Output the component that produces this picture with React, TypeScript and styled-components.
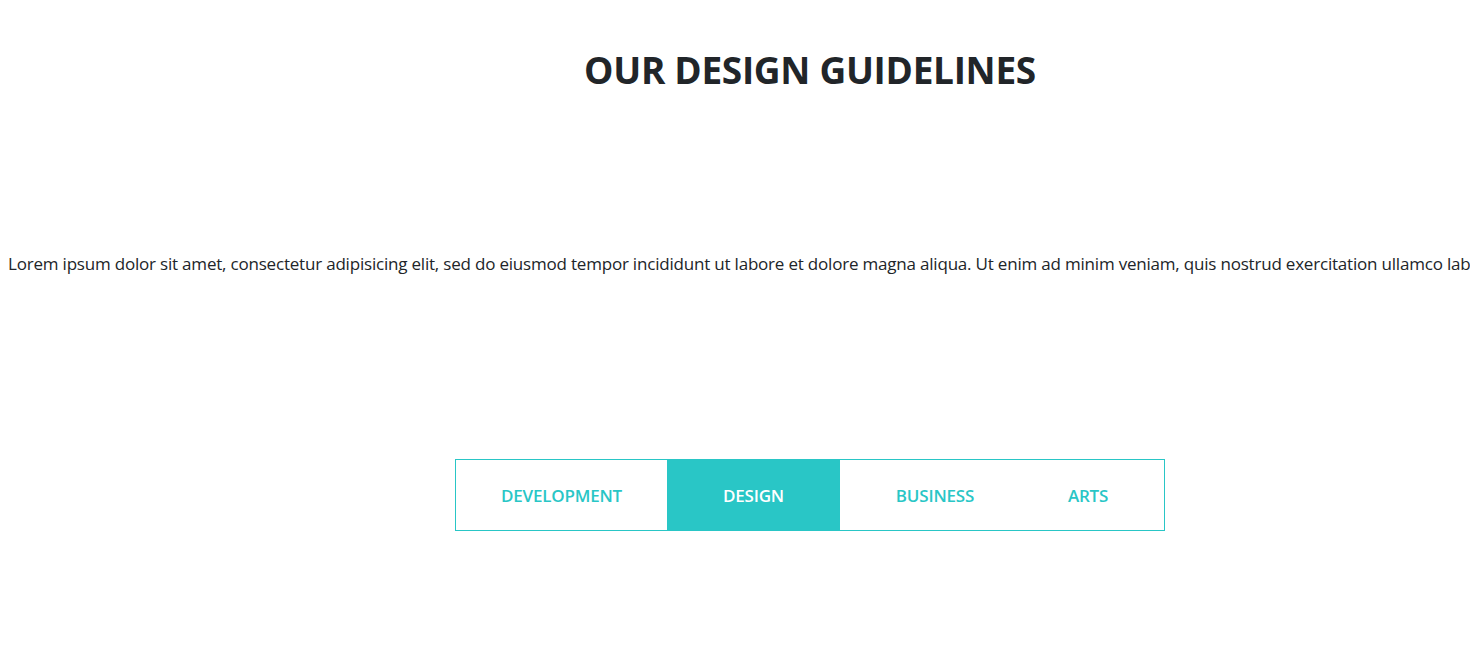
import React, { useState } from 'react';
import styled, { createGlobalStyle } from 'styled-components';

const GlobalStyle = createGlobalStyle`
  html, body {
    margin: 0;
    overflow: hidden;
    background: #ffffff;
  }
  body {
    padding: 0 8px;
    font-family: "Open Sans", "Noto Sans", Arial, sans-serif;
    color: #212529;
  }
`;

const Page = styled.main`
  width: 1604px;
  display: flex;
  flex-direction: column;
  align-items: center;
`;

const Title = styled.h1`
  margin: 44px 0 0;
  font-size: 37px;
  line-height: 52px;
  font-weight: 700;
  color: #212529;
  letter-spacing: -0.3px;
`;

const Lead = styled.p`
  align-self: stretch;
  margin: 156px 0 0;
  font-size: 17px;
  line-height: 24px;
  white-space: nowrap;
  letter-spacing: -0.2px;
`;

const Tabs = styled.nav`
  margin-top: 183px;
  display: flex;
  width: 710px;
  height: 72px;
  box-sizing: border-box;
  border: 1px solid #29c6c6;
`;

const Tab = styled.button<{ $active?: boolean; $width: number; $shift?: number }>`
  width: ${({ $width }) => $width}px;
  flex: none;
  display: flex;
  align-items: center;
  justify-content: center;
  padding: 0 ${({ $shift }) => $shift ?? 0}px 0 0;
  border: 0;
  margin: 0;
  background: ${({ $active }) => ($active ? '#29c6c6' : 'transparent')};
  color: ${({ $active }) => ($active ? '#ffffff' : '#29c6c6')};
  font-family: inherit;
  font-size: 17px;
  font-weight: 600;
  letter-spacing: -0.2px;
  text-transform: uppercase;
  cursor: pointer;
`;

const tabs = [
  { label: 'Development', width: 211 },
  { label: 'Design', width: 173 },
  { label: 'Business', width: 190 },
  { label: 'Arts', width: 134, shift: 18 },
];

export default function App() {
  const [active, setActive] = useState('Design');

  return (
    <>
      <GlobalStyle />
      <Page>
        <Title>OUR DESIGN GUIDELINES</Title>
        <Lead>
          Lorem ipsum dolor sit amet, consectetur adipisicing elit, sed do eiusmod tempor incididunt ut labore et dolore
          magna aliqua. Ut enim ad minim veniam, quis nostrud exercitation ullamco laboris nisi ut aliquip ex ea commodo
          consequat.
        </Lead>
        <Tabs>
          {tabs.map((tab) => (
            <Tab
              key={tab.label}
              $width={tab.width}
              $shift={tab.shift}
              $active={active === tab.label}
              onClick={() => setActive(tab.label)}
            >
              {tab.label}
            </Tab>
          ))}
        </Tabs>
      </Page>
    </>
  );
}
